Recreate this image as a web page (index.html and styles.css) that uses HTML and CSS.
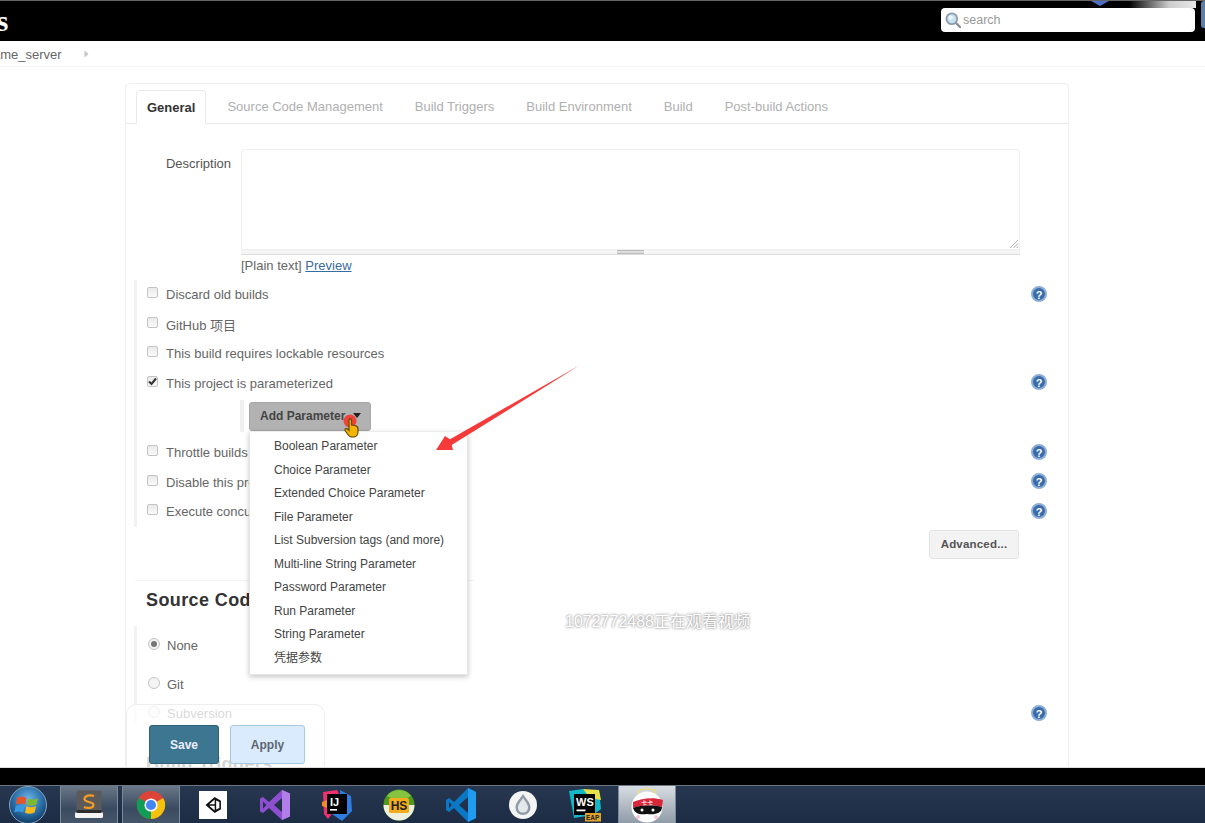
FILE: index.html
```html
<!DOCTYPE html>
<html lang="en">
<head>
<meta charset="utf-8">
<title>Jenkins</title>
<link rel="stylesheet" href="styles.css">
</head>
<body>
<div class="screen">
  <header class="topbar">
    <span class="logo">s</span>
    <i class="corner-tri"></i>
    <i class="corner-fade"></i>
    <i class="corner-blue"></i>
    <div class="search">
      <svg class="search-icon" viewBox="0 0 16 16" width="16" height="16"><line x1="10.5" y1="10.5" x2="15" y2="15" stroke="#8a8f94" stroke-width="2.4" stroke-linecap="round"/><circle cx="6.8" cy="6.8" r="5.4" fill="#c5e2f6" stroke="#8f9ba6" stroke-width="1.8"/><circle cx="5.6" cy="5.6" r="2.2" fill="#eef8ff"/></svg>
      <span>search</span>
    </div>
  </header>
  <nav class="crumbs"><span class="crumb-name">ame_server</span><svg class="crumb-arrow" viewBox="0 0 5 8" width="5" height="8"><path d="M0.5 0.5 L4.5 4 L0.5 7.5Z" fill="#c4c4c4"/></svg></nav>
  <main class="page">
    <section class="card">
      <div class="tabs">
        <span class="tab active">General</span>
        <span class="tab">Source Code Management</span>
        <span class="tab">Build Triggers</span>
        <span class="tab">Build Environment</span>
        <span class="tab">Build</span>
        <span class="tab">Post-build Actions</span>
      </div>
      <div class="form">
        <div class="desc">
          <label class="desc-label">Description</label>
          <div class="desc-field">
            <div class="textarea">
              <svg class="grip" viewBox="0 0 10 10" width="10" height="10"><path d="M1 9 L9 1 M4.5 9 L9 4.5 M7.5 9 L9 7.5" stroke="#aaa" stroke-width="1"/></svg>
            </div>
            <div class="drag"><i></i></div>
            <div class="plain">[Plain text] <a href="#">Preview</a></div>
          </div>
        </div>

        <div class="group">
          <div class="row"><i class="check"></i><span>Discard old builds</span><i class="help">?</i></div>
          <div class="row"><i class="check"></i><span>GitHub 项目</span></div>
          <div class="row"><i class="check"></i><span>This build requires lockable resources</span></div>
          <div class="row"><i class="check checked">
            <svg viewBox="0 0 11 11" width="11" height="11"><path d="M2 5.5 L4.5 8 L9 2.5" fill="none" stroke="#333" stroke-width="2"/></svg></i><span>This project is parameterized</span><i class="help">?</i></div>
          <div class="param-row">
            <button class="add-btn" type="button">Add Parameter<i class="caret"></i></button>
          </div>
          <div class="row"><i class="check"></i><span>Throttle builds</span><i class="help">?</i></div>
          <div class="row"><i class="check"></i><span>Disable this project</span><i class="help">?</i></div>
          <div class="row"><i class="check"></i><span>Execute concurrent builds if necessary</span><i class="help">?</i></div>
        </div>

        <div class="advanced-row"><button class="advanced" type="button">Advanced...</button></div>

        <h2 class="section-title">Source Code Management</h2>
        <div class="group scm">
          <div class="row radio-row"><i class="radio on"></i><span>None</span></div>
          <div class="row radio-row"><i class="radio"></i><span>Git</span></div>
          <div class="row radio-row"><i class="radio"></i><span>Subversion</span><i class="help">?</i></div>
        </div>
        <h2 class="section-title next">Build Triggers</h2>
      </div>
    </section>

    <ul class="menu">
      <li>Boolean Parameter</li>
      <li>Choice Parameter</li>
      <li>Extended Choice Parameter</li>
      <li>File Parameter</li>
      <li>List Subversion tags (and more)</li>
      <li>Multi-line String Parameter</li>
      <li>Password Parameter</li>
      <li>Run Parameter</li>
      <li>String Parameter</li>
      <li>凭据参数</li>
    </ul>

    <svg class="arrow" viewBox="0 0 146 90" width="146" height="90"><path d="M145 0 L15 74.300 L10 71 L1 85 L18 85 L16.700 80 Z" fill="#f53a3a"/></svg>

    <svg class="pointer" viewBox="0 0 24 30" width="24" height="30">
      <circle cx="10" cy="7" r="6.5" fill="#f0413a"/>
      <path transform="translate(1 -3)" d="M8 9 C8 7.5 10.5 7.5 10.5 9 L10.5 14 L14 14.5 C16.5 15 17 16 17 18 L17 21 C17 24 15 26 12.5 26 L10.5 26 C8.5 26 7.5 24.5 6.5 23 L4 19.5 C3.5 18 5 17 6.5 18 L8 19.5Z" fill="#f4b400" stroke="#5c4300" stroke-width="1.1"/>
    </svg>

    <div class="watermark">1072772488正在观看视频</div>

    <div class="savebar">
      <button class="save" type="button">Save</button>
      <button class="apply" type="button">Apply</button>
    </div>
  </main>
  <div class="black-strip"></div>
  <footer class="taskbar">
    <div class="start">
      <svg viewBox="0 0 40 40" width="40" height="40">
        <defs><radialGradient id="orb" cx="50%" cy="35%" r="65%"><stop offset="0" stop-color="#6fb6e8"/><stop offset="0.6" stop-color="#2a6ea8"/><stop offset="1" stop-color="#0f3a63"/></radialGradient></defs>
        <circle cx="20" cy="20" r="18.5" fill="url(#orb)" stroke="#8aa2b8" stroke-width="1"/>
        <path d="M9 13 C12 11 15 11 18.5 13 L17 19.5 C14 18 11.5 18 8 19.5Z" fill="#e8542a"/>
        <path d="M20 13.5 C23 15 26 15 30 13 L28.5 19.5 C25 21 22 21 18.8 19.8Z" fill="#7db82e"/>
        <path d="M7.8 21 C11 19.5 14 19.5 16.7 21 L15.2 27.5 C12.5 26 9.5 26 6.2 27.5Z" fill="#3a9ae0"/>
        <path d="M18.4 21.3 C21.5 22.5 25 22.5 28.2 21 L26.6 27.5 C23.5 29 20 29 17 27.8Z" fill="#f6b917"/>
      </svg>
    </div>
    <div class="task open">
      <svg viewBox="0 0 30 30" width="30" height="30">
        <rect x="2.500" y="0.500" width="25" height="25" rx="2" fill="#5a5a5a"/>
        <rect x="1" y="22" width="28" height="6" rx="1.500" fill="#f3f3f3"/>
        <rect x="2.500" y="20" width="25" height="3" fill="#2c2c2c"/>
        <path d="M20 6 C16 4.500 10.500 5.500 10.500 9 C10.500 13 19.500 11 19.500 15 C19.500 18.500 13 18.500 10 17" fill="none" stroke="#f39c24" stroke-width="2.200"/>
      </svg>
    </div>
    <div class="task open">
      <svg viewBox="0 0 32 32" width="30" height="30">
        <circle cx="16" cy="16" r="15" fill="#db4437"/>
        <path d="M16 16 L29 8.5 A15 15 0 0 1 16 31Z" fill="#f4c20d"/>
        <path d="M16 16 L16 31 A15 15 0 0 1 3 8.5Z" fill="#0f9d58"/>
        <circle cx="16" cy="16" r="7" fill="#fff"/>
        <circle cx="16" cy="16" r="5.4" fill="#4285f4"/>
      </svg>
    </div>
    <div class="task">
      <div class="unity">
        <svg viewBox="0 0 24 24" width="20" height="20"><path d="M14 2.5 L21.5 7 L21.5 17 L14 21.5 L3 12Z M14 5.5 L7.5 11 L14 11Z M14 18.5 L14 13 L7.5 13Z M15.8 6.5 L15.8 17.5 L19.6 15.5 L19.6 8.5Z" fill="#111" fill-rule="evenodd"/></svg>
      </div>
    </div>
    <div class="task">
      <svg viewBox="0 0 32 32" width="32" height="32"><path d="M23 1 L31 4.5 L31 27.5 L23 31 L10 19 L4 24 L1 22.5 L1 9.5 L4 8 L10 13Z M23 9 L15 16 L23 23Z M4 12.5 L4 19.5 L7.5 16Z" fill="#8c4fd0" fill-rule="evenodd"/><path d="M23 1 L31 4.5 L31 27.5 L23 31 L23 23 L23 9Z" fill="#b27fe8"/></svg>
    </div>
    <div class="task">
      <svg viewBox="0 0 34 34" width="34" height="34">
        <path d="M20 2 L31 8 L32 23 L22 33 L12 26 L20 14Z" fill="#2f7de1"/>
        <path d="M3 4 L17 2 L22 12 L8 31 L4 26Z" fill="#f0316f"/>
        <path d="M2 14 L7 12 L7 20 L2 18Z" fill="#f58a2b"/>
        <rect x="7" y="6" width="20" height="20" fill="#000"/>
        <text x="10" y="18" class="ij">IJ</text>
        <rect x="10" y="21" width="7" height="1.6" fill="#fff"/>
      </svg>
    </div>
    <div class="task">
      <svg viewBox="0 0 32 32" width="32" height="32">
        <circle cx="16" cy="16" r="15.5" fill="#4f9a1e"/>
        <path d="M0.5 16 A15.5 15.5 0 0 0 31.5 16Z" fill="#eef0df"/>
        <path d="M4 7 A15 15 0 0 1 28 7 C22 11 10 11 4 7Z" fill="#86c440"/>
        <rect x="6" y="9" width="20" height="15" rx="1.5" fill="#f5ac1c"/>
        <text x="16" y="21" class="hs">HS</text>
      </svg>
    </div>
    <div class="task">
      <svg viewBox="0 0 32 36" width="32" height="36">
        <path d="M23 1 L31 5 L31 31 L23 35 L9 21 L4 25 L1 23 L1 13 L4 11 L9 15Z M23 10 L14 18 L23 26Z M4 15 L4 21 L7 18Z" fill="#0a78c4" fill-rule="evenodd"/>
        <path d="M23 1 L31 5 L31 31 L23 35Z" fill="#1f9cf0"/>
      </svg>
    </div>
    <div class="task">
      <svg viewBox="0 0 30 30" width="30" height="30">
        <circle cx="15" cy="15" r="14" fill="#f4f4f4"/>
        <path d="M15 4 C18 9 22.5 12.5 22.5 17.5 C22.5 22 19 25 15 25 C11 25 7.5 22 7.5 17.5 C7.5 12.5 12 9 15 4Z" fill="#8f9ba6"/>
        <path d="M15 8 C17 11.5 20 14 20 17.5 C20 20.5 18 22.5 15 22.5 C12 22.5 10 20.5 10 17.5 C10 14 13 11.5 15 8Z" fill="#e4e8eb"/>
      </svg>
    </div>
    <div class="task">
      <svg viewBox="0 0 34 34" width="34" height="34">
        <path d="M1 3 L15 1 L20 5 L31 2 L33 21 L25 27 L6 30Z" fill="#12b8c8"/>
        <path d="M15 1 L31 2 L33 12 L22 10Z" fill="#e6e04a"/>
        <rect x="6" y="6" width="21" height="21" fill="#000"/>
        <text x="8" y="18" class="ws">WS</text>
        <rect x="8.500" y="21.500" width="9" height="1.800" fill="#fff"/>
        <rect x="17" y="25" width="16" height="8.500" fill="#e0a32e"/>
        <text x="18" y="32" class="eap">EAP</text>
      </svg>
    </div>
    <div class="task open light">
      <svg viewBox="0 0 34 36" width="34" height="36">
        <ellipse cx="17" cy="5" rx="9" ry="3" fill="none" stroke="#f2e06a" stroke-width="1.2"/>
        <circle cx="17" cy="20" r="15.500" fill="#fff"/>
        <path d="M3 15 C12 11 24 10 33 13 L32 20 C24 18 12 18 3 21Z" fill="#d8263a"/>
        <text x="11" y="18" class="ninja">卡卡</text>
        <path d="M3 21 C10 18 25 18 32 20 C32 26 26 28 17 27 C10 28 5 27 3 21Z" fill="#111"/>
        <circle cx="12" cy="23" r="1.500" fill="#fff"/>
        <circle cx="23" cy="23" r="1.500" fill="#fff"/>
        <circle cx="8" cy="30" r="2" fill="#f5c6d0"/>
        <circle cx="26" cy="30" r="2" fill="#f5c6d0"/>
      </svg>
    </div>
  </footer>
</div>
</body>
</html>
```

FILE: styles.css
```css
* { box-sizing: border-box; }
html, body { margin: 0; height: 100%; overflow: hidden; background: #fff; }
body { font-family: "Liberation Sans", "Noto Sans CJK SC", sans-serif; font-size: 13px; color: #555; }
i { font-style: normal; display: block; }

.screen { display: flex; flex-direction: column; width: 1205px; height: 823px; overflow: hidden; }

/* top bar */
.topbar { position: relative; flex: 0 0 41px; background: #000; border-top: 1px solid #666; display: flex; justify-content: flex-end; padding: 7px 10px 0 0; }
.logo { position: absolute; left: -3px; top: 1px; font: bold 29px/38px "Liberation Serif", serif; color: #fff; }
.corner-tri { position: absolute; left: 1091px; top: 0; width: 0; height: 0; border: 9px solid transparent; border-top: 5px solid #4a6fc9; border-bottom: 0; }
.corner-fade { position: absolute; left: 1129px; top: 0; width: 67px; height: 7px; background: linear-gradient(90deg, #000, #ccc 60%, #e8e8e8); }
.corner-blue { position: absolute; left: 1201px; top: 0; width: 4px; height: 27px; background: #5c7fa8; border-radius: 3px 0 0 3px; }
.search { display: flex; align-items: center; gap: 2px; width: 254px; height: 24px; padding-left: 4px; background: #fff; border-radius: 4px; color: #999; font-size: 12.5px; }

/* breadcrumb */
.crumbs { flex: 0 0 26px; display: flex; align-items: center; padding-top: 1px; border-bottom: 1px solid #f6f6f6; }
.crumb-name { margin-left: -7px; font-size: 13px; color: #666; }
.crumb-arrow { margin-left: 22px; }

/* page */
.page { position: relative; flex: 1 1 auto; overflow: hidden; padding: 16px 0 0 125px; }
.card { width: 944px; border: 1px solid #eee; border-radius: 4px 4px 0 0; min-height: 800px; }

.tabs { display: flex; align-items: flex-end; height: 40px; padding-left: 10px; border-bottom: 1px solid #e9e9e9; font-size: 13px; }
.tab { padding: 0 16px; height: 34px; line-height: 36px; color: #b0b0b0; white-space: nowrap; }
.tab.active { margin-right: 5px; padding: 0 10px; height: 34px; line-height: 33px; margin-bottom: -1px; background: #fff; border: 1px solid #e9e9e9; border-bottom-color: #fff; border-radius: 4px 4px 0 0; font-weight: bold; color: #333; }

.form { margin: 0 21px 0 9px; padding-top: 25px; }

.desc { display: flex; gap: 10px; margin-right: 27px; height: 124px; }
.desc-label { flex: 0 0 96px; text-align: right; padding-top: 7px; }
.desc-field { flex: 1 1 auto; }
.textarea { position: relative; height: 101px; border: 1px solid #eee; border-radius: 4px 4px 0 0; }
.grip { position: absolute; right: 0; bottom: 0; }
.drag { height: 5px; background: #f5f5f5; border-bottom: 1px solid #ddd; border-right: 1px solid #eee; display: flex; justify-content: center; }
.drag i { width: 27px; height: 4px; border-top: 1px solid #bbb; border-bottom: 1px solid #bbb; background: #ddd; }
.plain { padding-top: 3px; line-height: 15px; font-size: 13px; color: #666; }
.plain a { color: #3a6d9f; }

.group { margin-top: 7px; margin-left: -1px; border-left: 3px solid #f2f2f2; padding-left: 10px; }
.row { display: flex; align-items: center; height: 29.5px; gap: 8px; color: #666; }
.row span { flex: 1 1 auto; }
.check { flex: 0 0 11px; width: 11px; height: 11px; margin-top: -4px; background: linear-gradient(#eaeaea, #fafafa); border: 1px solid #c4c4c4; border-radius: 2px; }
.check.checked { position: relative; }
.check.checked svg { position: absolute; left: -1px; top: -1px; }
.help { flex: 0 0 16px; width: 16px; height: 16px; line-height: 14px; text-align: center; border-radius: 50%; background: #3a6cab; border: 2px solid #8daed6; color: #fff; font-size: 11px; font-weight: bold; margin-top: -2px; }

.param-row { height: 40px; margin-left: 93px; padding-left: 9px; display: flex; align-items: flex-start; position: relative; }
.param-row::before { content: ""; position: absolute; left: 0; top: 2px; width: 4px; height: 32px; background: #f0f0f0; }
.add-btn { margin-top: 4px; width: 122px; height: 29px; padding: 0 0 2px 10px; display: flex; align-items: center; background: #b2b2b2; border: 1px solid #a6a6a6; border-radius: 3px; font: bold 12px "Liberation Sans", sans-serif; color: #444; }
.caret { margin-left: 8px; width: 0; height: 0; border: 4px solid transparent; border-top: 5px solid #222; border-bottom: 0; }

.advanced-row { display: flex; justify-content: flex-end; margin: 3px 28px 0 0; }
.advanced { width: 90px; height: 29px; padding: 0; background: #f3f3f3; border: 1px solid #e4e4e4; border-radius: 3px; font: bold 11.5px "Liberation Sans", sans-serif; letter-spacing: 0.2px; color: #555; }

.section-title { margin: 21px 0 0; padding: 10px 0 0 11px; background: linear-gradient(#f3f3f3, #f3f3f3) no-repeat left top / 340px 1px; font-size: 18px; line-height: 21px; letter-spacing: 0.4px; color: #333; }
.section-title.next { margin-top: 20px; background: none; color: #555; }

.scm { margin-top: 15px; }
.radio-row { height: 39px; gap: 7px; padding-left: 1px; }
.radio-row:last-child { height: 20px; }
.radio-row span { font-size: 13px; }
.radio { flex: 0 0 12px; width: 12px; height: 12px; margin-top: -3px; border-radius: 50%; border: 1px solid #c4c4c4; background: #f4f4f4; position: relative; }
.radio.on::after { content: ""; position: absolute; left: 2px; top: 2px; width: 6px; height: 6px; border-radius: 50%; background: #777; }

/* overlays */
.menu { position: absolute; left: 249px; top: 364px; width: 219px; height: 244px; margin: 0; padding: 3px 0 0 24px; list-style: none; background: #fff; border: 1px solid #e6e6e6; border-top-color: #eee; box-shadow: 0 2px 5px rgba(0,0,0,.22); font-size: 12px; color: #444; }
.menu li { height: 23.55px; line-height: 23.55px; white-space: nowrap; }
.arrow { position: absolute; left: 435px; top: 298px; }
.pointer { position: absolute; left: 340px; top: 347px; }
.watermark { position: absolute; left: 565px; top: 546px; font-size: 16px; line-height: 18px; color: #fff; text-shadow: 0 0 3px #999, 0 0 2px #aaa; white-space: nowrap; }

.savebar { position: absolute; left: 126px; top: 637px; width: 199px; height: 70px; display: flex; gap: 11px; align-items: flex-start; padding: 20px 0 0 22px; background: rgba(255,255,255,.75); border: 1px solid #eee; border-bottom: 0; border-radius: 10px 10px 0 0; }
.save, .apply { height: 39px; padding: 0; border-radius: 3px; font: bold 12px "Liberation Sans", sans-serif; }
.save { width: 70px; background: #3c7690; border: 1px solid #2f6178; color: #eef; }
.apply { width: 75px; background: #d9ebfc; border: 1px solid #a8c9e4; color: #5c6670; }

/* bottom */
.black-strip { flex: 0 0 18px; background: #000; border-top: 1px solid #ddd; }
.taskbar { flex: 0 0 38px; display: flex; gap: 4px; align-items: center; background: linear-gradient(#26374f, #1c2c44); border-top: 1px solid #6b7684; }
.start { flex: 0 0 56px; height: 37px; display: flex; align-items: center; justify-content: center; }
.task { flex: 0 0 58px; height: 37px; display: flex; align-items: center; justify-content: center; }
.task.open { background: linear-gradient(#6a7888, #3a4a60 60%, #46566a); border: 1px solid #7e8a98; border-top: 0; border-bottom: 0; }
.task.light { background: linear-gradient(#d8dde3, #8f9ba8); }
.unity { width: 28px; height: 28px; background: #fff; display: flex; align-items: center; justify-content: center; }
.ij { font: bold 11px "Liberation Sans", sans-serif; fill: #fff; }
.hs { font: bold 12px "Liberation Sans", sans-serif; fill: #222; text-anchor: middle; }
.ws { font: bold 11px "Liberation Sans", sans-serif; fill: #fff; }
.eap { font: bold 6.5px "Liberation Sans", sans-serif; fill: #222; }
.ninja { font: 6px "Noto Sans CJK SC", sans-serif; fill: #fff; }
```
